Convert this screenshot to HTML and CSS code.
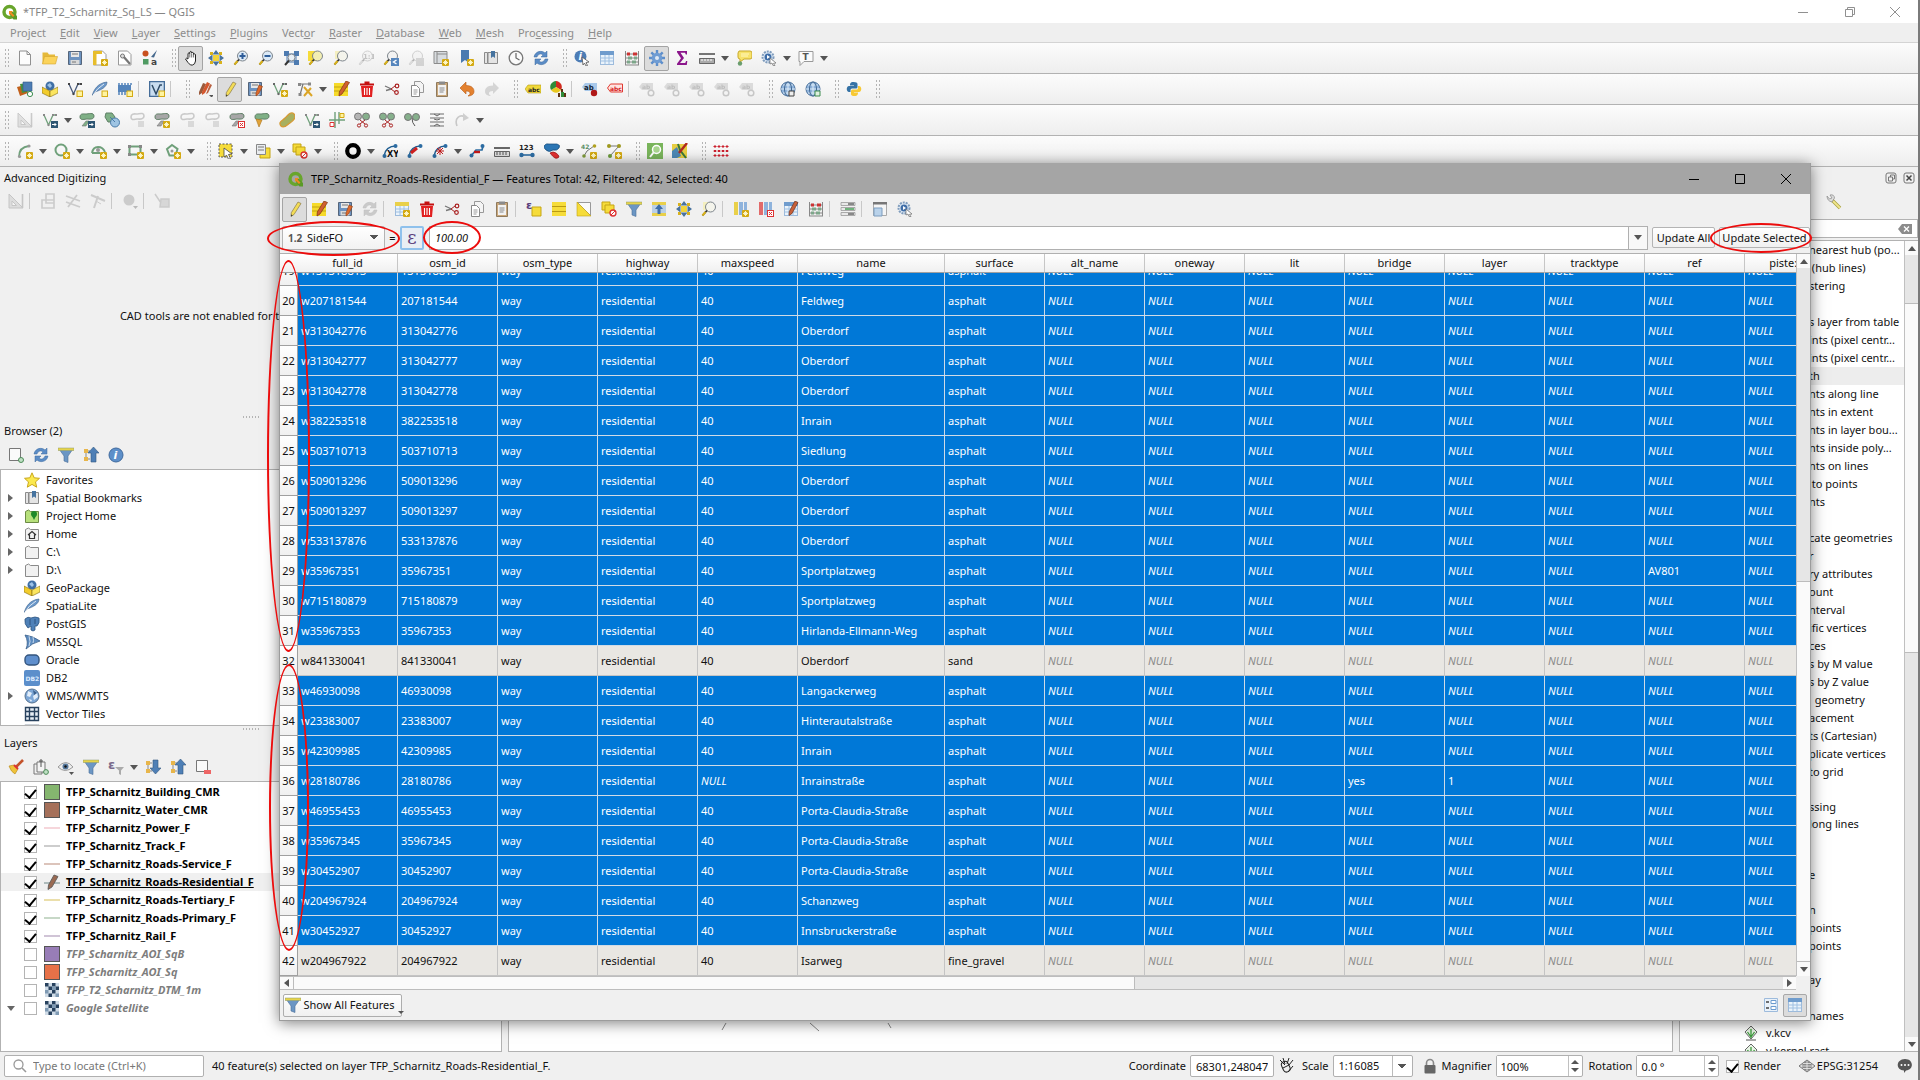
FILE: index.html
```html
<!DOCTYPE html>
<html lang="en">
<head>
<meta charset="utf-8">
<title>*TFP_T2_Scharnitz_Sq_LS — QGIS</title>
<link rel="stylesheet" href="styles.css">
</head>
<body>
<div class="app">
  <header class="titlebar">
    <span class="logo" data-icon="qgis"></span>
    <span class="titlebar-text">*TFP_T2_Scharnitz_Sq_LS — QGIS</span>
    <span class="winbtns">
      <button aria-label="Minimize" data-icon="wmin"></button>
      <button aria-label="Restore" data-icon="wrestore"></button>
      <button aria-label="Close" data-icon="wclose"></button>
    </span>
  </header>
  <nav class="menubar">
    <a href="#">Pro<u>j</u>ect</a><a href="#"><u>E</u>dit</a><a href="#"><u>V</u>iew</a><a href="#"><u>L</u>ayer</a><a href="#"><u>S</u>ettings</a><a href="#"><u>P</u>lugins</a><a href="#">Vect<u>o</u>r</a><a href="#"><u>R</u>aster</a><a href="#"><u>D</u>atabase</a><a href="#"><u>W</u>eb</a><a href="#"><u>M</u>esh</a><a href="#">Pro<u>c</u>essing</a><a href="#"><u>H</u>elp</a>
  </nav>
  <div class="bar" data-tools="| new open save newlayout layouts style | +pan panto zoomin zoomout zoomfull zoomsel zoomlayer -zoomnative zoomlast -zoomnext newview newbook book clock refresh | identify table abacus +gear sigma measure v tip action v text v"></div>
  <div class="bar" data-tools="| dsm gpkg vnew feather chip / vbox / | pencils +pencil saveedits vgreen vertex v multiedit trash cut copy paste undo -redo | abc pie / abcpin abcred / -lbl -lbl -lbl -lbl -lbl | globe globe2 | python |"></div>
  <div class="bar" data-tools="| -triangle vmove v blobmove blobs -bloboff blobadd -bloboff -bloboff blobdel blobfill bean vrot trim split1 split2 merge lines -rotate v"></div>
  <div class="bar" data-tools="| arc v circ v ellip v rect v poly v | select v selform v desel v | ring v xy curve cross v join ruler num shapes v nodes1 nodes2 | lens map | dots"></div>

  <main class="work">
    <aside class="dock dock-left">
      <h2>Advanced Digitizing</h2>
      <div class="panelbar panelbar-cad" data-tools="-triangle / -cad1 -cad2 -cad3 / -cad4 / -cad5"></div>
      <p class="cad-note">CAD tools are not enabled for the current map tool</p>
      <div class="splitter"></div>
      <h2>Browser (2)</h2>
      <div class="panelbar" data-tools="addlayer refresh filter collapse info"></div>
      <ul class="tree" id="browser"></ul>
      <div class="splitter"></div>
      <h2>Layers</h2>
      <div class="panelbar" data-tools="brush group eye filter expr v expand collapse remove"></div>
      <ul class="tree tree-layers" id="layers"></ul>
    </aside>
    <section class="map">
      <svg width="180" height="12" viewBox="0 0 180 12" fill="none" stroke="#888"><path d="M7 2L3 9M91 2l9 8M169 2l3 5"/></svg>
    </section>
    <aside class="dock dock-right">
      <div class="dock-head"><button aria-label="Float" data-icon="float"></button><button aria-label="Close panel" data-icon="closebox"></button></div>
      <div class="dock-tools"><button aria-label="Options" data-icon="wrench"></button></div>
      <div class="dock-search"><input type="text" aria-label="Search tools"><button aria-label="Clear" data-icon="clear"></button></div>
      <div class="toolbox">
        <ul id="toolbox"></ul>
        <div class="vscroll"><i class="arrow up"></i><i class="track before"></i><i class="thumb"></i><i class="track after"></i><i class="arrow down"></i></div>
      </div>
    </aside>
  </main>

  <footer class="status">
    <label class="locate"><span data-icon="search"></span><input type="text" placeholder="Type to locate (Ctrl+K)" aria-label="Locate"></label>
    <span class="message">40 feature(s) selected on layer TFP_Scharnitz_Roads-Residential_F.</span>
    <label class="field">Coordinate <input class="w-coord" type="text" value="68301,248047"></label>
    <span class="ico-mouse" data-icon="mouse"></span>
    <label class="field">Scale <select class="w-scale"><option>1:16085</option></select></label>
    <span class="ico-lock" data-icon="lock"></span>
    <label class="field">Magnifier <span class="spin w-mag"><input type="text" value="100%"><i></i></span></label>
    <label class="field f-rot">Rotation <span class="spin w-rot"><input type="text" value="0.0 °"><i></i></span></label>
    <label class="field f-render"><input type="checkbox" checked> Render</label>
    <a class="epsg" href="#"><span data-icon="crs"></span>EPSG:31254</a>
    <button class="bubble" aria-label="Messages" data-icon="bubble"></button>
  </footer>
</div>

<section class="dialog">
  <header class="dialog-title">
    <span class="logo" data-icon="qgis"></span>
    <span>TFP_Scharnitz_Roads-Residential_F — Features Total: 42, Filtered: 42, Selected: 40</span>
    <span class="winbtns">
      <button aria-label="Minimize" data-icon="wmin"></button>
      <button aria-label="Maximize" data-icon="wmax"></button>
      <button aria-label="Close" data-icon="wclose"></button>
    </span>
  </header>
  <div class="dialog-bar" data-tools="+pencil multiedit saveedits -refresh / tableadd trash cut copy paste / selexpr selall selinv desel filter movetop panto zoomlayer / coladd coldel coledit abacus / condfmt / dockwin action"></div>
  <div class="calc">
    <label class="fieldpick"><b>1.2</b><select aria-label="Field"><option>SideFO</option></select></label>
    <span class="eq">=</span>
    <button class="epsilon" aria-label="Expression">ε</button>
    <input class="value" type="text" value="100.00" aria-label="Value">
    <button class="value-drop" aria-label="Recent expressions"></button>
    <button class="push">Update All</button>
    <button class="push push-sel">Update Selected</button>
  </div>
  <div class="grid-area">
    <div class="grid-view" id="view">
      <table>
        <colgroup id="cols"></colgroup>
        <thead><tr id="head"></tr></thead>
        <tbody id="rows"></tbody>
      </table>
    </div>
    <div class="vscroll"><i class="arrow up"></i><i class="track before"></i><i class="thumb"></i><i class="arrow down"></i></div>
  </div>
  <div class="hscroll"><i class="arrow left"></i><i class="thumb"></i><i class="track"></i><i class="arrow right"></i></div>
  <footer class="dialog-foot">
    <button class="show"><span data-icon="filter"></span>Show All Features</button>
    <button class="view-btn" aria-label="Form view" data-icon="formview"></button>
    <button class="view-btn on" aria-label="Table view" data-icon="table"></button>
  </footer>
</section>

<div class="mark mark-field"></div>
<div class="mark mark-value"></div>
<div class="mark mark-update"></div>
<div class="mark mark-rows-a"></div>
<div class="mark mark-rows-b"></div>
<script src="app.js"></script>
</body>
</html>
```
FILE: styles.css
```css
* { box-sizing: border-box; }
body { margin: 0; font: 11px/18px "Noto Sans", "Open Sans", sans-serif; color: #111; background: #f0f0f0; overflow: hidden; }
button, input, select { font: inherit; color: inherit; margin: 0; padding: 0; border: 0; background: none; border-radius: 0; }
button { display: inline-flex; align-items: center; justify-content: center; }
a { color: inherit; text-decoration: none; }
ul { list-style: none; margin: 0; padding: 0; }
h2 { margin: 0; font: inherit; padding: 0 4px; height: 21px; line-height: 21px; }
svg { display: block; flex: none; }
input[type=text] { min-width: 0; outline: 0; }

.app { height: 100vh; display: flex; flex-direction: column; border-right: 2px solid #7a7a7a; }

.titlebar { display: flex; align-items: center; height: 23px; background: #fff; color: #868686; }
.titlebar .logo { width: 23px; padding-left: 2px; }
.winbtns { margin-left: auto; display: flex; align-self: stretch; }
.winbtns button { width: 46px; }
.titlebar .winbtns { color: #909090; }
.menubar { display: flex; height: 20px; padding-left: 3px; color: #8c8c8c; border-bottom: 1px solid #d4d4d4; background: #efefef; }
.menubar a { padding: 0 7px; line-height: 20px; }

.bar { display: flex; align-items: center; height: 31px; flex: none; background: linear-gradient(#fcfcfc, #eeeeee); border-bottom: 1px solid #b2b2b2; }
.tool { width: 25px; height: 25px; flex: none; border: 1px solid transparent; border-radius: 2px; }
.tool.on { background: #dcdcdc; border-color: #a4a4a4; }
.tool.off { opacity: .35; filter: grayscale(1); }
.drop { width: 12px; height: 25px; flex: none; }
.drop::before { content: ""; border: 4px solid transparent; border-top: 5px solid #555; border-bottom: 0; }
.grip { width: 16px; height: 20px; flex: none; background: radial-gradient(circle, #b4b4b4 0 1px, transparent 1px) 9px 0 / 3px 4px repeat-y, radial-gradient(circle, #b4b4b4 0 1px, transparent 1px) 12px 0 / 3px 4px repeat-y; }
.bar .grip:first-child { width: 12px; background-position: 4px 0, 7px 0; }
.sep { width: 6px; height: 16px; flex: none; border-left: 1px solid #c8c8c8; margin-left: 1px; }

.work { flex: 1; min-height: 0; display: flex; gap: 6px; }
.dock { display: flex; flex-direction: column; min-height: 0; flex: none; }
.dock-left { width: 502px; }
.dock-right { width: 239px; }
.panelbar { display: flex; align-items: center; height: 28px; padding-left: 3px; }
.panelbar-cad { height: 26px; }
.cad-note { margin: 0; height: 200px; padding-top: 4px; display: flex; align-items: center; justify-content: center; }
.splitter { height: 6px; flex: none; }
.splitter::before { content: ""; display: block; margin: 1px auto; width: 18px; height: 4px; background: radial-gradient(circle, #b4b4b4 0 1px, transparent 1px) 0 0 / 3px 4px; }
.tree { background: #fff; border: 1px solid #b2b2b2; overflow: hidden; height: 257px; flex: none; padding-top: 1px; }
.tree-layers { flex: 1; height: auto; }
.tree li { display: flex; align-items: center; height: 18px; }
.tree .twist { width: 23px; flex: none; display: flex; justify-content: center; padding-right: 4px; }
.twist.closed::before { content: ""; border: 4px solid transparent; border-left: 5px solid #666; border-right: 0; }
.twist.opened::before { content: ""; border: 4px solid transparent; border-top: 5px solid #666; border-bottom: 0; }
#browser svg { margin-right: 6px; }
#layers label { display: flex; align-items: center; font-weight: bold; color: #000; }
#layers .hidden { color: #7d7d7d; font-style: italic; }
#layers .current { background: #f0f0f0; }
#layers .current span { text-decoration: underline; }
input[type=checkbox] { appearance: none; width: 13px; height: 13px; border: 1px solid #b4b4b4; background: #fff; flex: none; display: inline-flex; justify-content: center; }
input[type=checkbox]:checked::before { content: ""; width: 5px; height: 9px; border: solid #000; border-width: 0 2px 2px 0; transform: rotate(40deg); }
#layers svg, #layers .swatch { width: 16px; height: 16px; margin: 0 6px 0 7px; flex: none; }
.swatch { border: 1px solid #555; }

.map { flex: 1; background: #fff; border: 1px solid #b2b2b2; display: flex; align-items: flex-end; padding: 0 0 18px 210px; }

.dock-head { height: 21px; display: flex; justify-content: flex-end; gap: 2px; padding-right: 1px; }
.dock-tools { height: 31px; display: flex; align-items: flex-start; padding: 6px 0 0 147px; }
.dock-search { height: 19px; display: flex; align-items: center; background: #fff; border: 1px solid #b2b2b2; padding-right: 4px; }
.dock-search input { flex: 1; }
.toolbox { flex: 1; min-height: 0; margin-top: 2px; display: flex; background: #fff; border: 1px solid #b2b2b2; border-right: 0; }
#toolbox { flex: 1; overflow: hidden; }
#toolbox li { height: 18px; padding-left: 129px; white-space: pre; }
#toolbox li.short { height: 17px; }
#toolbox li.hover { background: #ededed; }
#toolbox li.full { display: flex; align-items: center; padding-left: 63px; gap: 7px; }

.vscroll { width: 14px; flex: none; display: flex; flex-direction: column; background: #f6f6f6; border-left: 1px solid #c0c0c0; }
.vscroll .arrow, .hscroll .arrow { width: 13px; height: 14px; flex: none; display: flex; align-items: center; justify-content: center; background: #fafafa; }
.arrow::before { content: ""; border: 4px solid transparent; }
.arrow.up::before { border-bottom: 5px solid #555; border-top: 0; }
.arrow.down::before { border-top: 5px solid #555; border-bottom: 0; }
.arrow.left::before { border-right: 5px solid #555; border-left: 0; }
.arrow.right::before { border-left: 5px solid #555; border-right: 0; }
.track { background: #e6e6e6; }
.vscroll .thumb { background: #fafafa; border: solid #bcbcbc; border-width: 1px 0; }
.toolbox .before { flex: 48; }
.toolbox .thumb { flex: 349; }
.toolbox .after { flex: 384; }
.grid-area .before { flex: 314; }
.grid-area .thumb { flex: 380; }

.status { height: 28px; flex: none; display: flex; align-items: center; padding-left: 4px; background: #f0f0f0; }
.status input[type=text], .status select { height: 22px; background-color: #fff; }
.locate { display: flex; align-items: center; width: 200px; height: 22px; border: 1px solid #b0b0b0; border-radius: 2px; background: #fff; padding: 1px 7px; gap: 5px; }
.locate input[type=text] { flex: 1; height: 18px; }
.locate input::placeholder { color: #777; opacity: 1; }
.message { padding-left: 8px; flex: 1; }
.field { display: flex; align-items: center; gap: 4px; }
.field > input[type=text], .field select, .spin { border: 1px solid #b0b0b0; border-radius: 2px; padding: 0 5px; background-color: #fff; }
.w-coord { width: 84px; }
.field .w-scale { width: 80px; appearance: none; background: linear-gradient(to bottom right, #555 50%, transparent 50%) right 6px center / 4px 5px no-repeat, linear-gradient(to bottom left, #555 50%, transparent 50%) right 10px center / 4px 5px no-repeat, linear-gradient(#bbb, #bbb) right 19px center / 1px 20px no-repeat, #fff; }
.spin { display: flex; height: 22px; padding: 0; }
.spin input[type=text] { flex: 1; width: 20px; height: 20px; padding-left: 4px; }
.spin i { width: 14px; border-left: 1px solid #c0c0c0; display: flex; flex-direction: column; align-items: center; justify-content: center; gap: 4px; }
.spin i::before { content: ""; border: 4px solid transparent; border-bottom: 4px solid #555; border-top: 0; }
.spin i::after { content: ""; border: 4px solid transparent; border-top: 4px solid #555; border-bottom: 0; }
.w-mag { width: 87px; }
.w-rot { width: 83px; }
.ico-mouse { width: 28px; padding-left: 4px; }
.ico-lock { width: 29px; padding-left: 9px; }
.f-rot { margin-left: 6px; }
.f-render { margin-left: 7px; }
.epsg { display: flex; align-items: center; gap: 2px; margin-left: 18px; }
.bubble { width: 18px; margin: 0 4px 0 18px; }

.dialog { position: absolute; inset: 163px 109px 59px 279px; display: flex; flex-direction: column; background: #f0f0f0; border: 1px solid #9c9c9c; border-top: 0; box-shadow: 0 2px 14px rgba(0, 0, 0, .5); }
.dialog-title { height: 31px; flex: none; display: flex; align-items: center; background: #a5a5a5; color: #000; }
.dialog-title .logo { width: 31px; padding-left: 8px; }
.dialog-title .winbtns { padding-right: 1px; }
.dialog-bar { height: 30px; flex: none; display: flex; align-items: center; padding-left: 2px; }
.calc { height: 29px; flex: none; display: flex; align-items: center; padding: 0 0 2px 2px; }
.fieldpick { width: 103px; height: 24px; display: flex; align-items: center; border: 1px solid #b4b4b4; border-radius: 2px; background: linear-gradient(#fff, #f2f2f2); padding-left: 5px; }
.fieldpick b { color: #555; width: 19px; flex: none; font-size: 10px; }
.fieldpick select { appearance: none; flex: 1; min-width: 0; height: 22px; background: linear-gradient(to bottom right, #555 50%, transparent 50%) right 6px center / 4px 5px no-repeat, linear-gradient(to bottom left, #555 50%, transparent 50%) right 10px center / 4px 5px no-repeat; }
.eq { width: 15px; text-align: center; }
.epsilon { width: 24px; height: 24px; border: 2px solid #8fc1ec; border-radius: 2px; background: #e9eef4; color: #5a3d7c; font: 18px/18px "DejaVu Serif", serif; }
.value { flex: 1; height: 24px; margin-left: 5px; border: 1px solid #b0b0b0; background: #fff; padding-left: 5px; font-style: italic; }
.value-drop { width: 20px; height: 24px; border: 1px solid #b0b0b0; background: #f8f8f8; margin-left: -1px; }
.value-drop::before { content: ""; border: 4px solid transparent; border-top: 5px solid #555; border-bottom: 0; }
.push { height: 21px; width: 63px; margin-left: 4px; white-space: nowrap; border: 1px solid #b4b4b4; border-radius: 2px; background: linear-gradient(#fff, #f0f0f0); }
.push-sel { width: 91px; }
.grid-area { flex: 1; min-height: 0; display: flex; border-top: 1px solid #b0b0b0; }
.grid-view { flex: 1; min-width: 0; overflow: hidden; background: #fff; }
.grid-view table { border-spacing: 0; table-layout: fixed; width: 1565px; }
.c-num { width: 18px; }
.c-std { width: 100px; }
.c-name { width: 147px; }
thead th { position: sticky; top: 0; height: 19px; padding: 0; font-weight: normal; text-align: center; line-height: 18px; background: linear-gradient(#fff, #f0f0f0); border-right: 1px solid #c6c6c6; border-bottom: 1px solid #a0a0a0; }
thead th:first-child { border-right-color: transparent; }
tbody th { height: 30px; padding: 0; font-weight: normal; text-align: center; background: linear-gradient(#fff, #f0f0f0); border: solid #a0a0a0; border-width: 0 1px 1px 0; }
tbody td { height: 30px; padding: 0 3px; color: #fff; background: #0078d7; border: solid #d0dbe6; border-width: 0 1px 1px 0; white-space: nowrap; overflow: hidden; }
tbody .plain td { background: #e9e7e3; color: #111; border-color: #c4c4c4; }
tbody .null { font-style: italic; }
tbody .plain .null { color: #8a8a8a; }
.hscroll { height: 14px; flex: none; display: flex; border: solid #bdbdbd; border-width: 1px 0; margin-right: 14px; }
.hscroll .arrow { height: 12px; }
.hscroll .thumb { flex: 840; background: #fafafa; border: solid #bcbcbc; border-width: 0 1px; }
.hscroll .track { flex: 648; }
.dialog-foot { height: 30px; flex: none; display: flex; align-items: center; padding: 0 3px; }
.show { height: 23px; width: 119px; gap: 3px; padding-left: 3px; white-space: nowrap; margin-right: auto; border: 1px solid #adadad; border-radius: 2px; background: linear-gradient(#fff, #f0f0f0); }
.show::after { content: ""; align-self: flex-end; border: 3px solid transparent; border-top-color: #555; border-bottom: 0; margin-bottom: 2px; }
.view-btn { width: 24px; height: 23px; border: 1px solid transparent; }
.view-btn.on { background: #dcdcdc; border-color: #a8a8a8; border-radius: 2px; }

.mark { position: absolute; border: 2px solid #ec0c0c; border-radius: 50%; pointer-events: none; }
.mark-field { left: 267px; top: 221px; width: 133px; height: 35px; }
.mark-value { left: 423px; top: 221px; width: 58px; height: 33px; }
.mark-update { right: 108px; top: 223px; width: 102px; height: 30px; }
.mark-rows-a { left: 267px; top: 260px; width: 43px; height: 392px; }
.mark-rows-b { left: 269px; top: 664px; width: 40px; height: 287px; }
```
FILE: app.js
```js
const star = '<rect x="9" y="9" width="7" height="7" rx="1" fill="#d4aa14"/><path d="M12.5 10v5M10 12.5h5M11 11l3 3M14 11l-3 3" stroke="#fffbd0" stroke-width=".9"/>';
const ybox = '<rect x="10" y="10" width="5.5" height="5.5" fill="#fff4a0" stroke="#d4aa14"/>';
const redx = '<rect x="9.5" y="9.5" width="6" height="6" fill="#fff" stroke="#d33"/><path d="M11 11l3 3M14 11l-3 3" stroke="#d33"/>';
const lens = (fill, inner = '') => `<circle cx="9.5" cy="6" r="5" fill="${fill}" stroke="#7d858c"/><path d="M6 9.500L1.500 14.500" stroke="#333" stroke-width="1.800"/><path d="M4.500 11L1.500 14.500" stroke="#d9b21c" stroke-width="2"/>${inner}`;
const vee = (c, n) => `<path d="M2 3l4.500 10L11 3h3" fill="none" stroke="${c}" stroke-width="1.300"/><path d="M1 2h2v2h-2zM5.500 12h2v2h-2zM10 2h2v2h-2zM13 2h2v2h-2z" fill="${n}"/>`;
const blob = (c, x = '') => `<path d="M1 5c0-4 4-3 6-3s8-2 8 2-5 3-7 3-7 2-7-2z" fill="${c}" stroke="#5f7f66"/><path d="M7 9l-4 5h4l3-5z" fill="${c}" stroke="#777" stroke-width=".6"/>${x}`;
const badgeBlue = '<rect x="9" y="9" width="7" height="7" fill="#2e5673"/><path d="M10 12.500h4M12.500 11l1.500 1.500-1.500 1.500" stroke="#fff" fill="none"/>';
const tableShape = '<rect x="1.500" y="1.500" width="13" height="13" fill="#eaf3fb" stroke="#9dbbdc"/><path d="M1 1h14v4H1z" fill="#6f9ccd"/><path d="M2 8h12M2 11h12M6 5v9M10 5v9" stroke="#9fc0e2"/>';
const floppy = '<path d="M1.500 1.500h13v13h-13z" fill="#6d93c0" stroke="#55657a"/><path d="M4 2h8v5H4z" fill="#e8e8e8"/><path d="M3.500 10h9v4.500h-9z" fill="#d9d9d9"/><path d="M5 4h6M5 12h4" stroke="#777"/>';
const book = '<path d="M1.500 2.500h3v11h-3zM5 2.500h9.500v11H5z" fill="#e4e4e4" stroke="#8b8b8b"/>';
const folder = '<path d="M1.500 14.500v-11l3-1.500 2 1.500h8v11z" fill="#f1f1f1" stroke="#8a8a8a"/>';
const scissors = '<path d="M7.500 8L1 5M7.500 8L2 9.500" stroke="#777" stroke-width="1.300"/><path d="M7 8l4-3M7 8l4 3" stroke="#a22"/><circle cx="13" cy="5" r="1.800" fill="none" stroke="#a22" stroke-width="1.200"/><circle cx="12.500" cy="11.500" r="1.800" fill="none" stroke="#a22" stroke-width="1.200"/>';
const globeShape = '<circle cx="8" cy="8" r="7" fill="#8fb3dc" stroke="#4a719c"/><path d="M1 8h14M8 1v14M3 4h10M3 12h10" stroke="#dcebf7"/><ellipse cx="8" cy="8" rx="3.500" ry="7" fill="none" stroke="#3f6690"/>';
const checker = '<path d="M1 1h14v14H1z" fill="#cfdbe6"/><path d="M1 1h3.500v3.500H1zM8 1h3.500v3.500H8zM4.500 4.500H8V8H4.500zM11.500 4.500H15V8h-3.500zM8 8h3.500v3.500H8zM4.500 11.500H8V15H4.500z" fill="#28425e"/><path d="M1 8h3.500v3.500H1zM11.500 11.500H15V15h-3.500zM8 4.500h3.500V8H8z" fill="#7f9ab3"/>';
const sciss2 = '<path d="M6 8l5 4M11 8l-5 4" stroke="#a22"/><circle cx="5" cy="13.500" r="1.600" fill="none" stroke="#a22"/><circle cx="12" cy="13.500" r="1.600" fill="none" stroke="#a22"/>';
const nodes = '<path d="M2 13C3 7 7 3 14 3" fill="none" stroke="#1e5d91" stroke-width="1.500"/><circle cx="2.500" cy="13" r="2" fill="#2d6da3"/><circle cx="13.500" cy="3" r="2" fill="#2d6da3"/>';
const t = (x, y, size, fill, text, extra = '') => `<text x="${x}" y="${y}" font-size="${size}" fill="${fill}" font-weight="bold" font-family="DejaVu Sans" ${extra}>${text}</text>`;

const icons = {
  qgis: '<circle cx="7.500" cy="8" r="5.500" fill="none" stroke="#68a52c" stroke-width="3.400"/><path d="M8 8h3l4 4v3.500h-3.500L8 11z" fill="#5a9a26"/><path d="M7 7h4l-1.500 1.500 3 3-1.500 1.500-3-3L7 11z" fill="#ee8b1f"/>',
  wmin: '<path d="M3 8.500h10" stroke="currentColor"/>',
  wmax: '<path d="M3.500 3.500h9v9h-9z" fill="none" stroke="currentColor"/>',
  wrestore: '<path d="M4.500 5.500h7v7h-7zM6.500 5V3.500h7v7H12" fill="none" stroke="currentColor"/>',
  wclose: '<path d="M3 3l10 10M13 3L3 13" stroke="currentColor"/>',
  new: '<path d="M2.500 1h7.500l3.500 3.500V15h-11z" fill="#fdfdfd" stroke="#909090"/><path d="M10 1v3.500h3.500" fill="none" stroke="#909090"/>',
  open: '<path d="M.5 2.500h5l1.500 2h6v9.500H.5z" fill="#e5b93a"/><path d="M2.500 6.500h13l-2 7.500h-13z" fill="#fbd35a" stroke="#d3a52e" stroke-width=".6"/>',
  save: floppy,
  newlayout: '<path d="M1.500 1h9l3.500 3.500V15h-12.500z" fill="#fff" stroke="#999"/><path d="M1 1h3.500v14H1zM1 1h9v3H1z" fill="#e7bd2c"/>' + star,
  layouts: '<path d="M1.500 1h9l3.500 3.500V15h-12.500z" fill="#fff" stroke="#999"/><path d="M6 6l7 8" stroke="#777" stroke-width="2.200"/><circle cx="5.500" cy="6" r="2" fill="#ddd" stroke="#777"/>',
  style: '<circle cx="3.500" cy="3.500" r="3" fill="#c8501e"/><path d="M15 0l-6 7 3 .5z" fill="#44678c"/><rect x="1" y="9" width="5.500" height="5.500" fill="#4f9a62"/>' + t(9, 15, 9, '#444', 'a'),
  pan: '<path d="M5 9V3.500q1-1.300 1.800 0V2q1-1.300 1.900 0v1q1-1.200 1.900 0v1.500q1-1.200 1.900 0V11q-.4 3.500-3 4H7.500Q5 13 2.500 9q.8-1.600 2.500 0z" fill="#fff" stroke="#222"/><path d="M6.800 3.500v4M8.700 3.500v4M10.600 4.500v3" stroke="#333" stroke-width=".7"/>',
  panto: '<path d="M5 5h6v6H5z" fill="#f2d43a"/><path d="M8 0l3.500 4.500h-7zM8 16l3.500-4.500h-7zM0 8l4.500-3.500v7zM16 8l-4.500-3.500v7z" fill="#49739f"/><path d="M2 2h3v3H2zM11 2h3v3h-3zM2 11h3v3H2zM11 11h3v3h-3z" fill="#d9b21c"/>',
  zoomin: lens('#dbe9f6', '<path d="M6.500 6h6M9.500 3v6" stroke="#2f5e9a" stroke-width="2"/>'),
  zoomout: lens('#dbe9f6', '<path d="M6.500 6h6" stroke="#2f5e9a" stroke-width="2"/>'),
  zoomfull: '<path d="M1 1h5v5H1zM11 1h5v5h-5zM11 10h5v5h-5z" fill="#4d7bb0"/><path d="M4 4h9v8H4z" fill="none" stroke="#4d7bb0"/><circle cx="8.500" cy="7.500" r="3.500" fill="#e8eff5" stroke="#7d858c"/><path d="M6 10.500l-4 4.500" stroke="#333" stroke-width="2"/>',
  zoomsel: '<path d="M0 1h9v10H0z" fill="#f6dc3a"/>' + lens('#f2eeb2'),
  zoomlayer: '<path d="M2 1h9v8H2z" fill="#f4efc0"/>' + lens('#f4f4ec'),
  zoomnative: lens('#eee', t(5, 9, 7, '#666', '1:1')),
  zoomlast: lens('#f2f2f2', '<path d="M8 8h8v8H8z" fill="#5686bd"/><path d="M13.500 10l-3 2 3 2" stroke="#fff" fill="none" stroke-width="1.400"/>'),
  zoomnext: lens('#eee', '<path d="M8 8h8v8H8z" fill="#999"/>'),
  newview: '<path d="M1 1.500h13v12H1z" fill="#d8dcdf" stroke="#8b8b8b"/><path d="M4 2v11M4 4h10" stroke="#8b8b8b"/>' + star,
  newbook: '<path d="M3 0h8v13l-4-3-4 3z" fill="#4b7ab0"/>' + star,
  book: book + '<path d="M8 1h4v7l-2-1.500L8 8z" fill="#46739f"/>',
  clock: '<circle cx="8" cy="8" r="6.800" fill="#fafafa" stroke="#777" stroke-width="1.300"/><path d="M8 3v5l3.500 2" fill="none" stroke="#666" stroke-width="1.200"/>',
  refresh: '<path d="M1 7c1-6 8-7 11-4l2-2v6H8l2-2C8 3 5 4 4 7zM15 9c-1 6-8 7-11 4l-2 2V9h6l-2 2c2 2 5 1 6-2z" fill="#5b8cc6" stroke="#3c6a9e" stroke-width=".5"/>',
  identify: '<circle cx="6.500" cy="6.500" r="6" fill="#4c7cb5"/>' + t(4.5, 10, 10, '#fff', 'i', 'font-style="italic"') + '<path d="M8 7l7 5-3 .5 1.500 3-1.500.5-1.500-3L9 15z" fill="#fff" stroke="#555" stroke-width=".8"/>',
  table: tableShape,
  abacus: '<path d="M1.500 1v14M14.500 1v14M1 4h14M1 8h14M1 12h14M1 15h14" stroke="#888"/><path d="M3 2.500h3v3H3zM9 2.500h4v3H9z" fill="#c33"/><path d="M4 6.500h4v3H4zM10 6.500h3v3h-3zM3 10.500h3v3H3zM8 10.500h4v3H8z" fill="#7da78a"/>',
  gear: '<path d="M8 0v16M0 8h16M2.300 2.300l11.400 11.400M13.700 2.300L2.300 13.700" stroke="#5d8ecb" stroke-width="2.400"/><circle cx="8" cy="8" r="5.300" fill="#6f9cd3"/><circle cx="8" cy="8" r="2" fill="#dfe9f5"/>',
  sigma: '<path d="M3 1h10v3.500h-1.200L11 2.800H6.500L10 8l-4 5h5.200l.9-2h1.200L12.800 15H3v-1.200L7 8.300 3 2.200z" fill="#8b168b"/>',
  measure: '<path d="M0 4h16" stroke="#555" stroke-width="1.600"/><path d="M.5 8.500h15v5H.5z" fill="#aaa" stroke="#666"/><path d="M3 9v2M6 9v2M9 9v2M12 9v2" stroke="#fff"/>',
  tip: '<path d="M3 1h11q2 0 2 2v4q0 2-2 2H8l-4 3V9q-2 0-2-2V3z" fill="#f7e26b" stroke="#c8a92a"/><path d="M5 4h8M5 6h7" stroke="#fff7c0"/><circle cx="4" cy="13.500" r="2.200" fill="#6a9d6e"/>',
  action: '<circle cx="7" cy="7" r="5.500" fill="#dfe9f4" stroke="#7f9cbd" stroke-width="2" stroke-dasharray="2 1"/><circle cx="7" cy="7" r="3.500" fill="#3f6ea8"/><path d="M6 5l3 2-3 2z" fill="#fff"/><path d="M9 8l6 5-2.500.3L14 16l-2-.5-1-2.500-2 1z" fill="#fff" stroke="#777" stroke-width=".8"/>',
  text: '<path d="M1 1.500h14v10H6l-4 4v-4H1z" fill="#fbfbfb" stroke="#999"/>' + t(4.5, 10, 9, '#555', 'T'),
  dsm: '<path d="M0 6l8-2 3 8-8 3z" fill="#c2601c"/><path d="M3 3l8-1 2 8-8 2z" fill="#46913f"/><path d="M6 1h9v9H6z" fill="#4d7db5" stroke="#345b88" stroke-width=".6"/><circle cx="13" cy="13" r="2.600" fill="#fff" stroke="#3c8c4e"/>',
  gpkg: '<circle cx="8" cy="5" r="4.500" fill="#3f6fa5"/><path d="M5 4l3-2 2 3-2 2z" fill="#9dc3e8"/><path d="M0 6l8 4v6l-8-4z" fill="#f2cc2c" stroke="#806a12" stroke-width=".6"/><path d="M8 10l8-4v6l-8 4z" fill="#fbe560" stroke="#806a12" stroke-width=".6"/>',
  vnew: vee('#47597a', '#444') + ybox,
  feather: '<path d="M0 15C2 8 6 2 15 1c0 5-6 8-12 10z" fill="#6b98ca" stroke="#3d618c" stroke-width=".6"/><path d="M0 15.500Q5 7 12 3" stroke="#fff" fill="none" stroke-width=".8"/>',
  feathernew: '<path d="M0 15C2 8 6 2 15 1c0 5-6 8-12 10z" fill="#6b98ca" stroke="#3d618c" stroke-width=".6"/><path d="M0 15.500Q5 7 12 3" stroke="#fff" fill="none" stroke-width=".8"/>' + ybox,
  chip: '<path d="M1 4h13v7H1z" fill="#5484bb"/><path d="M2 2v2M5 2v2M8 2v2M11 2v2M14 2v2M2 11v3M5 11v3M8 11v3" stroke="#5484bb" stroke-width="1.500"/>' + ybox,
  vbox: '<path d="M.5.5h15v15H.5z" fill="#c9ddf0" stroke="#456d99" stroke-width="1.600"/><path d="M3 4l4 9 4-9h2" fill="none" stroke="#2e4a66" stroke-width="1.500"/>' + ybox,
  pencils: '<path d="M6 2l3 1-4 9-3 2v-3z" fill="#9a5a3c"/><path d="M10 1l3 1.500L8 12l-3 2v-3z" fill="#d4572e"/><path d="M13 3l2 1-4 8-2 1z" fill="#b96040"/><path d="M12 14h5l-2.500 2.500z" fill="#555"/>',
  pencil: '<path d="M11 1l3 1.500-7 11-3 2 .3-3.800z" fill="#f3dc55" stroke="#8a7a4a" stroke-width=".7"/><path d="M4 15.500l.2-2 1.500.8z" fill="#333"/>',
  saveedits: floppy + '<path d="M12 4l3.500 1.500-4 7.500-2.500 2V12z" fill="#dd6a2d" stroke="#8d3c13" stroke-width=".6"/>',
  vgreen: vee('#6fa07a', '#666') + star,
  vertex: '<path d="M2 3h11M3 14L6 3" stroke="#777" stroke-width="1.200"/><path d="M1 2h3v3H1zM11 1.500h3v3h-3zM1.500 12h3v3h-3z" fill="#888"/><path d="M7 6l8 9M14 7l-7 8" stroke="#dba526" stroke-width="2"/>',
  multiedit: '<path d="M0 2h14v13H0z" fill="#f6da2a"/><path d="M0 6h14M0 10h14" stroke="#c3a410"/><path d="M12 0l3.500 1.500L8 13l-3 2 .3-4z" fill="#d06030" stroke="#7d3414" stroke-width=".7"/>',
  trash: '<path d="M2 5h12l-1 11H3z" fill="#e12020"/><path d="M1 2.500h14v2H1zM5.500.5h5v2h-5z" fill="#c41010"/><path d="M5.500 7v7M8 7v7M10.500 7v7" stroke="#fff" stroke-width="1.100"/>',
  cut: scissors,
  copy: '<path d="M5.500.5h6l3 3v8h-9z" fill="#f4f4f4" stroke="#999"/><path d="M2.500 4.500h5l3 3v8h-8z" fill="#fff" stroke="#888"/><path d="M4.500 9h4M4.500 11h4M4.500 13h3" stroke="#999"/>',
  paste: '<path d="M2.500 1.500h11v14h-11z" fill="#c9a77b" stroke="#8f7a5d"/><path d="M4 4h8v10H4z" fill="#f2f2f2"/><path d="M5 .5h6v3H5z" fill="#8b8b8b"/><path d="M5.500 7h5M5.500 9h5M5.500 11h4" stroke="#888"/>',
  undo: '<path d="M1 7l6-6v3.500c6 0 8 3 8 6s-3 4.500-6 4.500c3-1.500 3-5-2-5V13z" fill="#e3812f" stroke="#b85d18" stroke-width=".6"/>',
  redo: '<path d="M15 7L9 1v3.500c-6 0-8 3-8 6S4 15 7 15c-3-1.500-3-5 2-5v3z" fill="#999"/>',
  abc: '<path d="M0 8l3-4h13v8H3z" fill="#efd83a" stroke="#b59c14" stroke-width=".6"/>' + t(3, 10.5, 6, '#222', 'abc'),
  pie: '<path d="M6 6V0a6 6 0 0 1 5 9z" fill="#d12a1e"/><path d="M6 6l5 3a6 6 0 0 1-10 0z" fill="#e8c81e"/><path d="M6 6L1 9A6 6 0 0 1 6 0z" fill="#2e8b38"/><path d="M8 12h2v4H8zM11 8h2v8h-2zM14 12h2v4h-2z" fill="#5c3213"/><path d="M11 11h3v5h-3z" fill="#2e8b38"/>',
  abcpin: '<path d="M0 6l3-4h12v8H3z" fill="#a9c9ea"/>' + t(2, 8.5, 7, '#123', 'ab') + '<circle cx="12" cy="12" r="3.200" fill="#b01818"/>',
  abcred: '<path d="M.5 7l3-4h12v8h-12z" fill="#ffe3e0" stroke="#e03a30"/>' + t(3, 9.5, 6, '#d4201a', 'abc'),
  lbl: '<path d="M0 6l3-4h11v7H3z" fill="#aaa"/>' + t(3, 8, 6, '#555', 'ab') + '<circle cx="12" cy="12" r="2.800" fill="none" stroke="#777" stroke-width="1.500"/>',
  globe: globeShape + '<path d="M9 10h5v5H9z" fill="#eee" stroke="#444"/>',
  globe2: globeShape + '<path d="M10 10h5v5h-5z" fill="#dff0df" stroke="#3c8c4e"/>',
  python: '<path d="M7.500 1C4 1 4 3 4 4.500h4V5H3C0 5 0 11 3 11h1.500V9Q4.500 7.500 6 7.500h4q1.500 0 1.500-1.500V3Q11.500 1 7.500 1z" fill="#3572a5"/><path d="M8.500 15c3.500 0 3.500-2 3.500-3.500H8V11h5c3 0 3-6 0-6h-1v2q0 1.500-1.500 1.500h-4Q5 8.500 5 10v3q0 2 3.500 2z" fill="#f7c935"/>',
  triangle: '<path d="M1 1l14 14H1z" fill="#bbb" stroke="#777"/><path d="M4 8l4.500 4.500H4z" fill="#fff" stroke="#777"/><path d="M14.500 1v14" stroke="#777" stroke-width="1.600"/>',
  vmove: vee('#6fa07a', '#888') + badgeBlue,
  blobmove: blob('#7fb086', badgeBlue),
  blobs: '<path d="M2 1h6l3 4-2 5H4L1 5z" fill="#7fb086" stroke="#5f7f66"/><circle cx="11" cy="10.500" r="4.500" fill="#9ec4e3" stroke="#4a7ba8"/><path d="M6 5l5 5" stroke="#4a7ba8"/>',
  bloboff: '<path d="M2 5c0-4 4-3 6-3s7-2 7 2-5 3-7 3-6 2-6-2z" fill="none" stroke="#777" stroke-width="1.600"/><path d="M9 9h6v6H9z" fill="#aaa"/>',
  blobadd: blob('#a7a7a7', star),
  blobdel: blob('#a7a7a7', redx),
  blobfill: '<path d="M1 5c0-4 4-3 6-3s8-2 8 2-5 3-7 3-7 2-7-2z" fill="#7fb086" stroke="#5f7f66"/><path d="M2 7l6 1-3 7z" fill="#e2a43a" stroke="#a9741c" stroke-width=".6"/>',
  bean: '<path d="M2 14c-3-4 1-5 4-8s6-7 9-4-1 7-4 9-6 6-9 3z" fill="#a7b060" stroke="#d59a35" stroke-width="1.300"/>',
  vrot: vee('#6fa07a', '#888') + badgeBlue,
  trim: '<path d="M6 0v16M0 8h16M10 0v12" stroke="#6fa07a" stroke-width="1.400"/><path d="M11 1.500h4v4h-4z" fill="#fff4a0" stroke="#d4aa14"/><path d="M1 10.500h4v4H1z" fill="#fff" stroke="#d33"/>',
  split1: '<circle cx="4" cy="4.500" r="3.500" fill="#b4b4b4" stroke="#777"/><circle cx="12" cy="4.500" r="3.500" fill="#86b08c" stroke="#777"/>' + sciss2,
  split2: '<circle cx="4" cy="4.500" r="3.500" fill="#86b08c" stroke="#777"/><circle cx="12" cy="4.500" r="3.500" fill="#86b08c" stroke="#777"/>' + sciss2,
  merge: '<circle cx="4" cy="5" r="3.500" fill="#86b08c" stroke="#777"/><circle cx="12" cy="5" r="3.500" fill="#86b08c" stroke="#777"/><path d="M8 6q0 5 3 8" fill="none" stroke="#555"/>',
  lines: '<path d="M1 2h14M1 6h14M1 10h14M1 14h14" stroke="#999" stroke-width="1.300"/><path d="M5 2l3 2 3-2M5 14l3-2 3 2M5 7l3 1 3-1" fill="none" stroke="#666"/>',
  rotate: '<path d="M3 14C0 6 6 2 11 5" fill="none" stroke="#777" stroke-width="1.600"/><path d="M9 1l6 5-6 3z" fill="#888"/>',
  arc: '<path d="M2 14Q2 4 12 3" fill="none" stroke="#6fa07a" stroke-width="1.800"/><circle cx="2.500" cy="13.500" r="1.600" fill="#999"/><circle cx="12" cy="3" r="1.600" fill="#999"/>' + star,
  circ: '<circle cx="7" cy="7" r="5.500" fill="none" stroke="#6fa07a" stroke-width="2"/>' + star,
  ellip: '<path d="M1 10Q2 4 7 4t7 5" fill="none" stroke="#6fa07a" stroke-width="2"/><path d="M1 10h8" stroke="#6fa07a" stroke-width="2"/><circle cx="7" cy="7" r="2" fill="#999"/>' + star,
  rect: '<path d="M1.500 3.500h11v8h-11z" fill="none" stroke="#6fa07a" stroke-width="2"/><path d="M0 2h3v3H0zM11 2h3v3h-3zM0 10h3v3H0z" fill="#888"/>' + star,
  poly: '<path d="M7 2l5.500 4-2 6.500h-6L2 6z" fill="none" stroke="#6fa07a" stroke-width="2"/><circle cx="7" cy="8" r="1.500" fill="#999"/>' + star,
  select: '<path d="M1 1h13v13H1z" fill="#f6dc3a" stroke="#555" stroke-dasharray="2 1.500"/><path d="M6 5l8 6-3.500.5 2 4-2 .8-1.800-4L6 14z" fill="#fff" stroke="#444" stroke-width=".8"/>',
  selform: '<path d="M5 5h10v10H5z" fill="#f6dc3a" stroke="#c5a514"/><path d="M1.500 1.500h9v10h-9z" fill="#e9ecef" stroke="#888"/><path d="M3 4h6M3 7h6" stroke="#777"/>',
  desel: '<path d="M1 1h8v8H1z" fill="#f6dc3a" stroke="#c5a514"/><path d="M4 4h9v8H4z" fill="#f6dc3a" stroke="#c5a514"/><circle cx="12" cy="12" r="3" fill="#fff" stroke="#d33" stroke-width="1.300"/><path d="M10 14l4-4" stroke="#d33"/>',
  ring: '<circle cx="8" cy="8" r="5.800" fill="none" stroke="#000" stroke-width="4.200"/>',
  xy: nodes + t(5, 14, 8, '#111', 'XY'),
  curve: nodes + '<path d="M4 10L10 5" stroke="#d02020" stroke-width="3"/>',
  cross: nodes + '<path d="M8 4v8M4 8h8M5 5l6 6M11 5l-6 6" stroke="#c21a1a"/>',
  join: '<path d="M2 13l5-6h6l1-4" stroke="#2d6da3" stroke-width="1.700" fill="none"/><circle cx="2.500" cy="12.500" r="2" fill="#2d6da3"/><circle cx="13.500" cy="3" r="2" fill="#2d6da3"/><path d="M5 9h6" stroke="#c21a1a" stroke-width="2.400"/>',
  ruler: '<path d="M0 5h16" stroke="#444" stroke-width="1.600"/><path d="M.5 8.500h15v5H.5z" fill="#ddd" stroke="#666"/><path d="M3 9v3M6 9v3M9 9v3M12 9v3" stroke="#555"/>',
  num: t(0, 7, 7, '#222', '123') + '<path d="M2 12h12" stroke="#2d6da3" stroke-width="1.600"/><circle cx="2.500" cy="12" r="2.200" fill="#2d6da3"/><circle cx="13.500" cy="12" r="2.200" fill="#2d6da3"/>',
  shapes: '<path d="M0 3q2-3 5-2h8q4 1 2 4t-6 2q-4 3-7 0t-2-4z" fill="#2d77b5" stroke="#184c78" stroke-width=".7"/><path d="M6 10q3-2 6 0t3 4q-2 2-4 1t-5-5z" fill="#e23030" stroke="#911" stroke-width=".7"/>',
  nodes1: '<path d="M3 13l3-5 7-5" stroke="#777" fill="none"/>' + t(0, 6, 6, '#5b8f63', '42') + '<circle cx="3" cy="13" r="1.800" fill="#7e9a3a"/><circle cx="13.500" cy="3" r="1.800" fill="#b2a220"/>' + star,
  nodes2: '<path d="M3 3h10L4 13" stroke="#777" fill="none"/><circle cx="3" cy="3" r="2" fill="#a09a20"/><circle cx="13" cy="3" r="2" fill="#a09a20"/><circle cx="4" cy="13" r="2" fill="#6b9a3a"/>' + star,
  lens: '<path d="M0 0h16v16H0z" fill="#7ab55c"/><circle cx="9.500" cy="6.500" r="4" fill="#a9d68f" stroke="#fff" stroke-width="1.500"/><path d="M6.500 9.500L3 14" stroke="#fff" stroke-width="2"/>',
  map: '<path d="M0 1h15v14H0z" fill="#e8cf43"/><path d="M0 8l5-4 4 9-4 2H0z" fill="#4d88b5"/><path d="M6 1l2 6 6 8" stroke="#3b7a3b" fill="none" stroke-width="2"/><path d="M15 0L7 10" stroke="#b02a20" stroke-width="2.400"/>',
  dots: '<path d="M0 3.500h16M0 8h16M0 12.500h16" stroke="#e08a8a"/><path d="M1 3.500h15M1 8h15M1 12.500h15" stroke="#cc1f2f" stroke-width="2" stroke-dasharray="2 2"/>',
  cad1: '<path d="M2 7h12v8H2zM6 1h8v9H6z" fill="none" stroke="#888" stroke-width="1.600"/>',
  cad2: '<path d="M1 3l14 5M1 9l14 5M3 14L12 2" stroke="#888" stroke-width="1.800"/>',
  cad3: '<path d="M1 2l14 6M4 15L8 3" stroke="#888" stroke-width="2"/><path d="M6 8l5 3" stroke="#888"/>',
  cad4: '<circle cx="7" cy="7" r="5.500" fill="#888"/><path d="M11 13h5l-2.500 3z" fill="#555"/>',
  cad5: '<path d="M1 1l6 9M7 6h8v8H6z" fill="#aaa" stroke="#888" stroke-width="1.500"/>',
  addlayer: '<path d="M1.500 1.500h11v12h-11z" fill="#fafafa" stroke="#777"/><circle cx="13" cy="13" r="2.500" fill="#bfe0c4" stroke="#4c8a58"/>',
  filter: '<path d="M1 2h14l-5 7v6.500l-4-1.500V9z" fill="#6b96c4" stroke="#4a6f99" stroke-width=".6"/><path d="M0 1h16v2.500H0z" fill="#e6d44a" stroke="#8f9a70" stroke-width=".5"/>',
  collapse: '<path d="M3 3v10M3 4h4M3 12h4" stroke="#888"/><path d="M1 2h4v4H1zM1 10h4v4H1z" fill="#e8b64b"/><path d="M10.500 0L16 6h-3v9H8V6H5z" fill="#4e7fb6" stroke="#34597f" stroke-width=".6"/>',
  expand: '<path d="M3 3v10M3 4h4M3 12h4" stroke="#888"/><path d="M1 2h4v4H1zM1 10h4v4H1z" fill="#e8b64b"/><path d="M10.500 15L16 9h-3V1H8v8H5z" fill="#4e7fb6" stroke="#34597f" stroke-width=".6"/>',
  info: '<circle cx="8" cy="8" r="7" fill="#5d8fc9" stroke="#3f6a9e"/>' + t(5.5, 12, 11, '#fff', 'i', 'font-style="italic"'),
  brush: '<path d="M15 1L8 8" stroke="#c4522a" stroke-width="2.600"/><path d="M1 7l5-1 4 4-3 5Q3 13 1 7z" fill="#efc23a" stroke="#b58717" stroke-width=".6"/><path d="M6 6l4 4" stroke="#d33" stroke-width="2"/>',
  group: '<path d="M1 5h8v10H1z" fill="none" stroke="#777"/><path d="M4 3h8v10H4z" fill="#f4f4f4" stroke="#777"/><path d="M8 0v8M6 2h4" stroke="#555"/><circle cx="13" cy="13" r="2.400" fill="#bfe0c4" stroke="#4c8a58"/>',
  eye: '<path d="M0 8q8-9 15 0-8 7-15 0z" fill="#eee" stroke="#999"/><circle cx="7.500" cy="7.500" r="3" fill="#54779c"/><circle cx="7.500" cy="7.500" r="1.200" fill="#111"/><path d="M11 13h5l-2.500 3z" fill="#555"/>',
  expr: t(0, 10, 13, '#7b6c8c', 'ε') + '<path d="M7 8h9l-3 3.500V16l-2-1v-3.500z" fill="#aaa"/>',
  remove: '<path d="M1.500 1.500h11v11h-11z" fill="#fafafa" stroke="#777"/><path d="M9 11h7v4H9z" fill="#e66"/>',
  float: '<rect x="3" y="3" width="10" height="10" rx="2" fill="none" stroke="#777"/><path d="M5.500 7h4v4h-4zM7.500 7V5h4v4H10" fill="none" stroke="#777"/>',
  closebox: '<rect x="3" y="3" width="10" height="10" rx="2" fill="none" stroke="#777"/><path d="M5.500 5.500l5 5M10.500 5.500l-5 5" stroke="#444" stroke-width="1.500"/>',
  wrench: '<path d="M6 6l8 8" stroke="#a8a040" stroke-width="3.400"/><path d="M7 7l7 7" stroke="#f0e68c" stroke-width="1.800"/><path d="M1 2l2.500 3L6 4 4 1q4-1 4.500 3L6 8Q1 7 1 2z" fill="#ddd" stroke="#888" stroke-width=".7"/>',
  clear: '<path d="M1 8l4-5h10v10H5z" fill="#8c8c8c"/><path d="M7 5.500l5 5M12 5.500l-5 5" stroke="#fff" stroke-width="1.300"/>',
  search: '<circle cx="6.500" cy="6.500" r="4.500" fill="none" stroke="#999" stroke-width="1.300"/><path d="M10 10l4 4" stroke="#999" stroke-width="1.600"/>',
  mouse: '<rect x="4" y="3" width="7" height="11" rx="3.500" fill="#eee" stroke="#222" transform="rotate(-25 8 8)"/><path d="M2 2l5 5M5 0l2 6M11 0l-2 6M15 2l-4 5M5 10l6-3M10 14l5-6" stroke="#222"/>',
  lock: '<path d="M4.500 8V5a3.500 3.500 0 0 1 7 0v3" fill="none" stroke="#888" stroke-width="1.600"/><rect x="2.500" y="7" width="11" height="8.500" rx="1" fill="#666"/>',
  crs: '<path d="M0 8l8-6 8 6-8 6z" fill="#ddd" stroke="#777"/><circle cx="8" cy="8" r="5" fill="#888"/><path d="M3 8h10M8 3v10M4 5.500h8M4 10.500h8" stroke="#eee" stroke-width=".8"/>',
  bubble: '<path d="M8 1c9 0 9 11 1 11.500L7 15v-2.500C-2 12-1 1 8 1z" fill="#555"/><circle cx="4.500" cy="7" r="1" fill="#fff"/><circle cx="8" cy="7" r="1" fill="#fff"/><circle cx="11.500" cy="7" r="1" fill="#fff"/>',
  tableadd: tableShape + '<path d="M1 1h14v4H1z" fill="#e9d04a"/>' + star,
  selexpr: '<path d="M6 6h9v9H6z" fill="#f6dc3a" stroke="#c5a514"/>' + t(0, 8, 11, '#5a3d7c', 'ε'),
  selall: '<path d="M1 1h14v14H1z" fill="#f6dc3a"/><path d="M1 5.500h14M1 10.500h14" stroke="#b99a12"/>',
  selinv: '<path d="M1.500 1.500h13v13z" fill="#fafafa" stroke="#999"/><path d="M1 1v14h14z" fill="#f6dc3a" stroke="#c5a514" stroke-width=".6"/>',
  movetop: '<path d="M1 1h14v14H1z" fill="#b9cfe6"/><path d="M1 1h14v3H1zM1 12h14v3H1z" fill="#e9d04a"/><path d="M8 3l4 5H9.500v5h-3V8H4z" fill="#3f6ea8"/>',
  coladd: '<path d="M1 1h4v13H1z" fill="#e9d04a"/><path d="M6 1h4v13H6zM11 1h3v13h-3z" fill="#8fb3dc"/>' + star,
  coldel: '<path d="M1 1h4v13H1z" fill="#e26a6a"/><path d="M6 1h4v13H6zM11 1h3v13h-3z" fill="#8fb3dc"/>' + redx,
  coledit: tableShape + '<path d="M12 0l3 1.500-6 11-3 2 .3-4z" fill="#c8603a" stroke="#6a3420" stroke-width=".7"/>',
  condfmt: '<path d="M1 1.500h14v3H1zM1 6.500h14v3H1zM1 11.500h14v3H1z" fill="#e8e8e8" stroke="#999" stroke-width=".8"/><path d="M8 2h6v2H8z" fill="#888"/><path d="M5 7h9v2H5z" fill="#6fb27c"/><path d="M8 12h6v2H8z" fill="#888"/>',
  dockwin: '<path d="M1.500 1.500h13v13h-13z" fill="#f5f5f5" stroke="#aaa"/><path d="M1 1h14v2.500H1z" fill="#777"/><path d="M2 7h8v8H2z" fill="#b9d2ea" stroke="#7c9dbf"/>',
  formview: '<path d="M1.500 1.500h13v13h-13z" fill="#eaf2fa" stroke="#9dbbdc"/><path d="M3 5h3M3 11h3" stroke="#444" stroke-width="1.400"/><path d="M8 3.500h5v3H8zM8 9.500h5v3H8z" fill="#fff" stroke="#6d9ccf"/>',
  fav: '<path d="M8 .8l2.200 5 5.300.5-4 3.600 1.200 5.300L8 12.400l-4.700 2.800 1.200-5.300-4-3.600 5.300-.5z" fill="#fbe94e" stroke="#c9a71d"/>',
  home: folder + '<path d="M4 9l4-3.500L12 9M5.500 8.500V12.500h5V8.500" fill="none" stroke="#333" stroke-width="1.200"/>',
  projhome: '<path d="M1.500 14.500v-11l3-1.500 2 1.500h8v11z" fill="#b7e07b" stroke="#6c8a45"/><circle cx="10" cy="6" r="3" fill="#1f8a28"/><path d="M8 8l2 4 2-4z" fill="#1f8a28"/>',
  folder,
  pg: '<path d="M1 3q3-3 6-1 4-2 8 0 1 5-2 8l-2 0v4q-2 2-4 0V10L4 12Q0 8 1 3z" fill="#4f81b8" stroke="#2f5580" stroke-width=".8"/><path d="M6 3v6M11 3v5" stroke="#2f5580"/>',
  mssql: '<path d="M1 1q8 1 15 6-8 2-14 8 3-7-1-14z" fill="#5d8cc0" stroke="#3a5f8a" stroke-width=".8"/><path d="M5 2q2 6 0 10M9 3q1 4 0 6" stroke="#e3eef8" fill="none" stroke-width=".8"/>',
  oracle: '<rect x="1" y="3" width="14" height="10" rx="4" fill="#5f8fcd" stroke="#34557e" stroke-width="1.400"/>',
  db2: '<rect width="16" height="16" rx="2" fill="#5c8fcb"/>' + t(1.5, 10.5, 6, '#dcecff', 'DB2'),
  wms: '<circle cx="8" cy="8" r="7" fill="#7da7d6" stroke="#55718f"/><path d="M4 3l4 2-2 4-3-1zM9 8l4-3 1 4-4 3zM5 11l3 1-1 2z" fill="#e3eefa"/><path d="M9 2l4 3-3 2z" fill="#3c618c"/>',
  vt: '<path d="M1.500 1.500h13v13h-13z" fill="#e6eef6" stroke="#28425e" stroke-width="1.400"/><path d="M5.500 1v14M10.500 1v14M1 5.500h14M1 10.500h14" stroke="#28425e" stroke-width="1.400"/>',
  checker,
  editing: '<path d="M0 9h16" stroke="#9aa" stroke-width="1.500"/><path d="M10 1l4 1.500L8 13l-4 2.500.5-4.500z" fill="#9a6a52" stroke="#555" stroke-width=".8"/>',
  grass: '<path d="M8 1l6 6-6 7-6-7z" fill="#e9f5e6" stroke="#666"/><path d="M8 13V4M8 12L4.500 7M8 12l3.500-5" stroke="#3c9a3c" stroke-width="1.300"/><path d="M3 15h10" stroke="#555"/>'
};

const svg = name => `<svg width="16" height="16" viewBox="0 0 16 16" aria-hidden="true">${icons[name]}</svg>`;
const byId = id => document.getElementById(id);

document.querySelectorAll('[data-icon]').forEach(el => el.insertAdjacentHTML('afterbegin', svg(el.dataset.icon)));

document.querySelectorAll('[data-tools]').forEach(bar => {
  bar.innerHTML = bar.dataset.tools.split(' ').map(tool => {
    if (tool === '|') return '<span class="grip"></span>';
    if (tool === '/') return '<span class="sep"></span>';
    if (tool === 'v') return '<button class="drop" aria-label="More"></button>';
    const state = { '+': ' on', '-': ' off' }[tool[0]] || '';
    const name = state ? tool.slice(1) : tool;
    return `<button class="tool${state}" aria-label="${name}">${svg(name === 'feather' ? 'feathernew' : name)}</button>`;
  }).join('');
});

byId('browser').innerHTML = [
  ['fav', 'Favorites', 0], ['book', 'Spatial Bookmarks', 1], ['projhome', 'Project Home', 1], ['home', 'Home', 1],
  ['folder', 'C:\\', 1], ['folder', 'D:\\', 1], ['gpkg', 'GeoPackage', 0], ['feather', 'SpatiaLite', 0],
  ['pg', 'PostGIS', 0], ['mssql', 'MSSQL', 0], ['oracle', 'Oracle', 0], ['db2', 'DB2', 0], ['wms', 'WMS/WMTS', 1],
  ['vt', 'Vector Tiles', 0], ['vt', '', 0]
].map(([icon, name, child]) => `<li><span class="twist${child ? ' closed' : ''}"></span>${svg(icon)}${name}</li>`).join('');

const line = c => `<svg viewBox="0 0 16 16"><path d="M0 8h16" stroke="${c}" stroke-width="1.500"/></svg>`;
const swatch = c => `<i class="swatch" style="background:${c}"></i>`;
byId('layers').innerHTML = [
  ['TFP_Scharnitz_Building_CMR', swatch('#85b66f'), 1], ['TFP_Scharnitz_Water_CMR', swatch('#a5705a'), 1],
  ['TFP_Scharnitz_Power_F', line('#f3c9cf'), 1], ['TFP_Scharnitz_Track_F', line('#bdbdbd'), 1],
  ['TFP_Scharnitz_Roads-Service_F', line('#d0b0a4'), 1], ['TFP_Scharnitz_Roads-Residential_F', svg('editing'), 1, 'current'],
  ['TFP_Scharnitz_Roads-Tertiary_F', line('#e5d48f'), 1], ['TFP_Scharnitz_Roads-Primary_F', line('#b5cbb5'), 1],
  ['TFP_Scharnitz_Rail_F', line('#c0b0c8'), 1], ['TFP_Scharnitz_AOI_SqB', swatch('#987db7'), 0],
  ['TFP_Scharnitz_AOI_Sq', swatch('#e77148'), 0], ['TFP_T2_Scharnitz_DTM_1m', svg('checker'), 0],
  ['Google Satellite', svg('checker'), 0, 'opened']
].map(([name, sym, on, flag]) => `<li class="${flag === 'current' ? 'current' : ''}"><span class="twist ${flag === 'opened' ? 'opened' : ''}"></span><label class="${on ? '' : 'hidden'}"><input type="checkbox" ${on ? 'checked' : ''}>${sym}<span>${name}</span></label></li>`).join('');

byId('toolbox').innerHTML = [
  'nearest hub (po...', ' (hub lines)', 'stering', '', 's layer from table', 'ints (pixel centr...', 'ints (pixel centr...',
  '*th', 'nts along line', 'nts in extent', 'nts in layer bou...', 'nts inside poly...', 'nts on lines', ' to points', 'nts', '',
  'cate geometries', 'r', 'ry attributes', 'ount', 'nterval', 'ific vertices', 'ces', 's by M value', 's by Z value', '  geometry',
  'acement', 'ts (Cartesian)', 'plicate vertices', 'to grid', '~', '~ssing', '~long lines', '~', '~', '~e', '', 'n', 'points',
  '~points', '~', 'ay', '', '~names', '#v.kcv', '#v.kernel.rast'
].map(s => {
  if (s[0] === '~') return `<li class="short">${s.slice(1)}</li>`;
  if (s[0] === '*') return `<li class="hover">${s.slice(1)}</li>`;
  if (s[0] === '#') return `<li class="full">${svg('grass')}${s.slice(1)}</li>`;
  return `<li>${s}</li>`;
}).join('');

const columns = ['full_id', 'osm_id', 'osm_type', 'highway', 'maxspeed', 'name', 'surface', 'alt_name', 'oneway', 'lit', 'bridge', 'layer', 'tracktype', 'ref', 'piste:type'];
const features = [
  [19, '131318813', 'Feldweg'], [20, '207181544', 'Feldweg'], [21, '313042776', 'Oberdorf'], [22, '313042777', 'Oberdorf'],
  [23, '313042778', 'Oberdorf'], [24, '382253518', 'Inrain'], [25, '503710713', 'Siedlung'], [26, '509013296', 'Oberdorf'],
  [27, '509013297', 'Oberdorf'], [28, '533137876', 'Oberdorf'], [29, '35967351', 'Sportplatzweg', { ref: 'AV801' }],
  [30, '715180879', 'Sportplatzweg'], [31, '35967353', 'Hirlanda-Ellmann-Weg'], [32, '841330041', 'Oberdorf', { surface: 'sand', plain: 1 }],
  [33, '46930098', 'Langackerweg'], [34, '23383007', 'Hinterautalstraße'], [35, '42309985', 'Inrain'],
  [36, '28180786', 'Inrainstraße', { maxspeed: null, bridge: 'yes', layer: '1' }], [37, '46955453', 'Porta-Claudia-Straße'],
  [38, '35967345', 'Porta-Claudia-Straße'], [39, '30452907', 'Porta-Claudia-Straße'], [40, '204967924', 'Schanzweg'],
  [41, '30452927', 'Innsbruckerstraße'], [42, '204967922', 'Isarweg', { surface: 'fine_gravel', plain: 1 }]
];
byId('cols').innerHTML = '<col class="c-num">' + columns.map(c => `<col class="${c === 'name' ? 'c-name' : 'c-std'}">`).join('');
byId('head').innerHTML = '<th></th>' + columns.map(c => `<th scope="col">${c}</th>`).join('');
byId('rows').innerHTML = features.map(([n, id, name, extra = {}]) => {
  const f = { full_id: 'w' + id, osm_id: id, osm_type: 'way', highway: 'residential', maxspeed: '40', name, surface: 'asphalt', ...extra };
  const cells = columns.map(c => f[c] ? `<td>${f[c]}</td>` : '<td class="null">NULL</td>').join('');
  return `<tr class="${f.plain ? 'plain' : ''}"><th scope="row">${n}</th>${cells}</tr>`;
}).join('');
byId('view').scrollTop = byId('view').scrollHeight;
```
